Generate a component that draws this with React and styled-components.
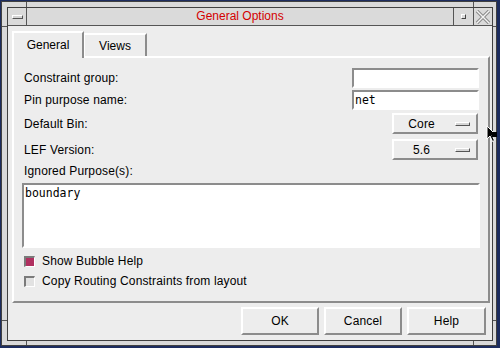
import styled, { createGlobalStyle } from 'styled-components'

const GlobalStyle = createGlobalStyle`
  html, body { margin: 0; padding: 0; }
  body {
    width: 500px;
    height: 348px;
    overflow: hidden;
    background: #1c2c5e;
    font-family: "Liberation Sans", Arial, Helvetica, sans-serif;
    font-size: 12px;
    color: #000;
  }
  * { box-sizing: border-box; }
`

const HI = '#ffffff'
const LO = '#8c8c8c'
const LINE = '#404040'

// bevel helpers
const raised = `
  border-style: solid;
  border-width: 2px;
  border-color: ${HI} ${LO} ${LO} ${HI};
`
const sunken = `
  border-style: solid;
  border-width: 2px;
  border-color: ${LO} ${HI} ${HI} ${LO};
`

const Desktop = styled.div`
  position: relative;
  width: 500px;
  height: 348px;
  padding: 1px 0 0 1px;
`

// window manager frame
const Frame = styled.div`
  position: relative;
  width: 496px;
  height: 345px;
  padding: 5px 3px 4px 5px;
  background: #d9d9d9;
  border: 1px solid ${LINE};
`

const Tick = styled.div`
  position: absolute;
  background: #555;
  left: ${p => p.x}px;
  top: ${p => p.y}px;
  width: ${p => (p.v ? 1 : p.len)}px;
  height: ${p => (p.v ? p.len : 1)}px;
`

const Win = styled.div`
  display: flex;
  flex-direction: column;
  width: 486px;
  height: 334px;
  border: 1px solid ${LINE};
`

const TitleBar = styled.div`
  display: flex;
  height: 18px;
  background: #dadada;
  border-bottom: 1px solid #555;
`

const TitleButton = styled.div`
  width: ${p => p.w}px;
  display: flex;
  align-items: center;
  justify-content: center;
  ${p => (p.left ? 'border-right: 1px solid #555;' : 'border-left: 1px solid #555;')}
`

const MenuBar = styled.div`
  width: 11px;
  height: 4px;
  background: #d4d4d4;
  border: 1px solid;
  border-color: ${HI} #555 #555 ${HI};
`

const MaxBox = styled.div`
  width: 5px;
  height: 5px;
  background: #dadada;
  border: 1px solid;
  border-color: ${HI} #444 #444 ${HI};
`

const TitleText = styled.div`
  flex: 1;
  text-align: center;
  line-height: 17px;
  color: #d40000;
  font-size: 12px;
`

const Content = styled.div`
  flex: 1;
  display: flex;
  flex-direction: column;
  background: #ededed;
  padding: 5px 2px 5px 4px;
`

const TabBar = styled.div`
  display: flex;
  align-items: flex-end;
  height: 25px;
  position: relative;
  z-index: 1;
`

const Tab = styled.div`
  width: ${p => p.w}px;
  height: ${p => (p.active ? 27 : 23)}px;
  margin-bottom: ${p => (p.active ? -2 : 0)}px;
  padding-bottom: ${p => (p.active ? 2 : 0)}px;
  background: #ededed;
  display: flex;
  align-items: center;
  justify-content: center;
  font-size: 12px;
  border-style: solid;
  border-color: ${HI} ${LO} transparent ${HI};
  border-width: 2px 2px 0 ${p => (p.active ? 2 : 1)}px;
`

const Panel = styled.div`
  height: 247px;
  ${raised}
  display: flex;
  flex-direction: column;
  padding: 10px 9px 0 10px;
`

const Row = styled.div`
  display: flex;
  align-items: center;
  justify-content: space-between;
  height: ${p => p.h}px;
  margin-top: ${p => p.mt || 0}px;
`

const Label = styled.span`
  font-size: 12px;
  letter-spacing: 0.15px;
`

const Entry = styled.div`
  width: 127px;
  height: 20px;
  ${sunken}
  background: #fff;
  padding-left: 1px;
  font-family: "DejaVu Sans Mono", "Liberation Mono", monospace;
  font-size: 11.5px;
  line-height: 16px;
`

const OptionMenu = styled.div`
  width: 86px;
  height: 21px;
  margin-right: 1px;
  ${raised}
  display: flex;
  align-items: center;
  padding: 0 6px 0 2px;
`

const OptionText = styled.span`
  width: 52px;
  text-align: center;
  font-size: 12px;
  letter-spacing: 0.15px;
`

const OptionMark = styled.span`
  width: 15px;
  height: 4px;
  margin-left: 8px;
  background: #d6d6d6;
  border: 1px solid;
  border-color: ${HI} #555 #555 ${HI};
`

const TextBox = styled.div`
  height: 65px;
  margin: 5px -1px 0 -2px;
  ${sunken}
  background: #fff;
  padding: 1px 0 0 1px;
  font-family: "DejaVu Sans Mono", "Liberation Mono", monospace;
  font-size: 11.5px;
  line-height: 14px;
`

const CheckRow = styled.div`
  display: flex;
  align-items: center;
  gap: 7px;
  height: 14px;
  margin-top: 6px;
`

const CheckBox = styled.span`
  width: 11px;
  height: 11px;
  border-style: solid;
  border-width: 2px 1px 1px 2px;
  border-color: #7a7a7a ${HI} ${HI} #7a7a7a;
  background: ${p => (p.on ? '#b03060' : '#e2e2e2')};
`

const ButtonRow = styled.div`
  display: flex;
  justify-content: flex-end;
  gap: 5px;
  margin-top: 4px;
  padding-right: 4px;
`

const Button = styled.div`
  width: ${p => p.w}px;
  height: 28px;
  ${raised}
  display: flex;
  align-items: center;
  justify-content: center;
  font-size: 12px;
  letter-spacing: 0.15px;
`

const Cursor = styled.svg`
  position: absolute;
  left: 486px;
  top: 125px;
`

const CloseIcon = () => (
  <svg width="16" height="14" viewBox="0 0 16 14">
    <path d="M2 1 L14 13 M14 1 L2 13" stroke="#8a8a8a" strokeWidth="3.4" fill="none" />
    <path d="M2 1 L14 13 M14 1 L2 13" stroke="#f4f4f4" strokeWidth="1.4" fill="none" />
  </svg>
)

export default function App() {
  return (
    <>
      <GlobalStyle />
      <Desktop>
        <Frame>
          <Tick v x={24} y={0} len={5} />
          <Tick v x={471} y={0} len={5} />
          <Tick v x={24} y={339} len={4} />
          <Tick v x={471} y={339} len={4} />
          <Tick x={0} y={24} len={5} />
          <Tick x={491} y={24} len={3} />
          <Tick x={0} y={318} len={5} />
          <Tick x={491} y={318} len={3} />
          <Win>
            <TitleBar>
              <TitleButton w={19} left>
                <MenuBar />
              </TitleButton>
              <TitleText>General Options</TitleText>
              <TitleButton w={20}>
                <MaxBox />
              </TitleButton>
              <TitleButton w={19}>
                <CloseIcon />
              </TitleButton>
            </TitleBar>
            <Content>
              <TabBar>
                <Tab w={72} active>General</Tab>
                <Tab w={63}>Views</Tab>
              </TabBar>
              <Panel>
                <Row h={20}>
                  <Label>Constraint group:</Label>
                  <Entry />
                </Row>
                <Row h={20} mt={2}>
                  <Label>Pin purpose name:</Label>
                  <Entry>net</Entry>
                </Row>
                <Row h={21} mt={3}>
                  <Label>Default Bin:</Label>
                  <OptionMenu>
                    <OptionText>Core</OptionText>
                    <OptionMark />
                  </OptionMenu>
                </Row>
                <Row h={21} mt={5}>
                  <Label>LEF Version:</Label>
                  <OptionMenu>
                    <OptionText>5.6</OptionText>
                    <OptionMark />
                  </OptionMenu>
                </Row>
                <Row h={14} mt={4}>
                  <Label>Ignored Purpose(s):</Label>
                </Row>
                <TextBox>boundary</TextBox>
                <CheckRow>
                  <CheckBox on />
                  <Label>Show Bubble Help</Label>
                </CheckRow>
                <CheckRow>
                  <CheckBox />
                  <Label>Copy Routing Constraints from layout</Label>
                </CheckRow>
              </Panel>
              <ButtonRow>
                <Button w={78}>OK</Button>
                <Button w={78}>Cancel</Button>
                <Button w={79}>Help</Button>
              </ButtonRow>
            </Content>
          </Win>
        </Frame>
        <Cursor width="12" height="18" viewBox="0 0 12 18">
          <path d="M1 1 L1 14 L4 11 L6.5 16.5 L8.5 15.5 L6 10 L10 10 Z" fill="#000" stroke="#fff" strokeWidth="1" />
          <rect x="6" y="7" width="5" height="5" fill="#000" />
        </Cursor>
      </Desktop>
    </>
  )
}
